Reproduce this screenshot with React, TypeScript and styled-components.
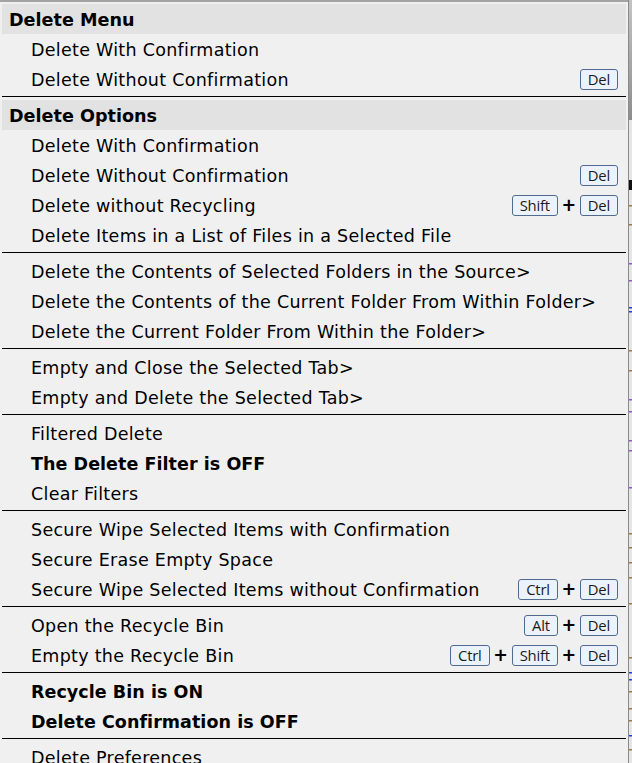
import React from "react";
import styled, { createGlobalStyle } from "styled-components";

const Global = createGlobalStyle`
  html, body {
    margin: 0;
    padding: 0;
    overflow: hidden;
    background: #f0f0f0;
  }
  body {
    font-family: "DejaVu Sans", Verdana, sans-serif;
  }
`;

const Screen = styled.div`
  display: flex;
  width: 632px;
  height: 763px;
  overflow: hidden;
`;

const Panel = styled.div`
  flex: 0 0 628px;
  box-sizing: border-box;
  border-top: 2px solid #a3a3a3;
  padding: 2px 2px 0 2px;
  background: #f0f0f0;
  display: flex;
  flex-direction: column;
`;

const Header = styled.div`
  flex: 0 0 30px;
  box-sizing: border-box;
  display: flex;
  align-items: center;
  padding: 2px 0 0 7px;
  background: #e2e2e2;
  font-size: 17.6px;
  font-weight: bold;
  color: #000;
`;

const Item = styled.div<{ $bold?: boolean }>`
  flex: 0 0 30px;
  box-sizing: border-box;
  display: flex;
  align-items: center;
  justify-content: space-between;
  padding: 2px 8px 0 29px;
  font-size: 17.5px;
  letter-spacing: ${(p) => (p.$bold ? "0.05px" : "0.28px")};
  font-weight: ${(p) => (p.$bold ? "bold" : "normal")};
  color: #000;
  white-space: nowrap;
`;

const Separator = styled.div`
  flex: 0 0 1px;
  margin: 2px 0 3px;
  background: #000;
`;

const Keys = styled.div`
  display: flex;
  align-items: center;
  margin-top: -2px;
  letter-spacing: 0;
`;

const Key = styled.span`
  display: inline-flex;
  align-items: center;
  justify-content: center;
  box-sizing: border-box;
  height: 21px;
  padding: 0 7px;
  border: 1px solid #4f6b8f;
  border-radius: 3px;
  background: #ecf2fb;
  font-family: "Open Sans", "Noto Sans", sans-serif;
  font-size: 14.8px;
  letter-spacing: -0.2px;
  font-weight: normal;
  color: #1a1a1a;
`;

const Plus = styled.span`
  display: inline-flex;
  justify-content: center;
  width: 22px;
  font-family: "DejaVu Sans", sans-serif;
  font-size: 17.5px;
  font-weight: bold;
  line-height: 21px;
  color: #000;
`;

const Strip = styled.svg`
  flex: 0 0 4px;
  display: block;
`;

type Row =
  | { kind: "header"; text: string }
  | { kind: "sep" }
  | { kind: "item"; text: string; bold?: boolean; keys?: string[] };

const rows: Row[] = [
  { kind: "header", text: "Delete Menu" },
  { kind: "item", text: "Delete With Confirmation" },
  { kind: "item", text: "Delete Without Confirmation", keys: ["Del"] },
  { kind: "sep" },
  { kind: "header", text: "Delete Options" },
  { kind: "item", text: "Delete With Confirmation" },
  { kind: "item", text: "Delete Without Confirmation", keys: ["Del"] },
  { kind: "item", text: "Delete without Recycling", keys: ["Shift", "Del"] },
  { kind: "item", text: "Delete Items in a List of Files in a Selected File" },
  { kind: "sep" },
  { kind: "item", text: "Delete the Contents of Selected Folders in the Source>" },
  { kind: "item", text: "Delete the Contents of the Current Folder From Within Folder>" },
  { kind: "item", text: "Delete the Current Folder From Within the Folder>" },
  { kind: "sep" },
  { kind: "item", text: "Empty and Close the Selected Tab>" },
  { kind: "item", text: "Empty and Delete the Selected Tab>" },
  { kind: "sep" },
  { kind: "item", text: "Filtered Delete" },
  { kind: "item", text: "The Delete Filter is OFF", bold: true },
  { kind: "item", text: "Clear Filters" },
  { kind: "sep" },
  { kind: "item", text: "Secure Wipe Selected Items with Confirmation" },
  { kind: "item", text: "Secure Erase Empty Space" },
  { kind: "item", text: "Secure Wipe Selected Items without Confirmation", keys: ["Ctrl", "Del"] },
  { kind: "sep" },
  { kind: "item", text: "Open the Recycle Bin", keys: ["Alt", "Del"] },
  { kind: "item", text: "Empty the Recycle Bin", keys: ["Ctrl", "Shift", "Del"] },
  { kind: "sep" },
  { kind: "item", text: "Recycle Bin is ON", bold: true },
  { kind: "item", text: "Delete Confirmation is OFF", bold: true },
  { kind: "sep" },
  { kind: "item", text: "Delete Preferences" },
];

const marks: { y: number; c: string }[] = [
  { y: 205, c: "#9a7a4a" },
  { y: 224, c: "#9a7a4a" },
  { y: 263, c: "#8a5cc0" },
  { y: 280, c: "#8a5cc0" },
  { y: 307, c: "#2040d0" },
  { y: 311, c: "#2040d0" },
  { y: 350, c: "#9a7a4a" },
  { y: 370, c: "#9a7a4a" },
  { y: 399, c: "#8a5cc0" },
  { y: 411, c: "#8a5cc0" },
  { y: 440, c: "#8a5cc0" },
  { y: 450, c: "#8a5cc0" },
  { y: 487, c: "#8a5cc0" },
  { y: 533, c: "#9a7a4a" },
  { y: 547, c: "#9a7a4a" },
  { y: 562, c: "#9a7a4a" },
  { y: 577, c: "#9a7a4a" },
  { y: 603, c: "#9a7a4a" },
  { y: 657, c: "#9a7a4a" },
  { y: 672, c: "#2040d0" },
  { y: 679, c: "#2040d0" },
  { y: 691, c: "#9a7a4a" },
  { y: 708, c: "#9a7a4a" },
  { y: 720, c: "#9a7a4a" },
  { y: 735, c: "#2040d0" },
  { y: 749, c: "#9a7a4a" },
];

function BackgroundSliver() {
  return (
    <Strip width="4" height="763" viewBox="0 0 4 763">
      <defs>
        <linearGradient id="topg" x1="0" y1="0" x2="0" y2="1">
          <stop offset="0" stopColor="#c4c4c4" />
          <stop offset="1" stopColor="#8c8c8c" />
        </linearGradient>
      </defs>
      <rect x="0" y="0" width="4" height="120" fill="url(#topg)" />
      <rect x="0" y="120" width="4" height="643" fill="#e6e6e6" />
      <rect x="0" y="0" width="1" height="763" fill="#8a8a8a" />
      <rect x="1" y="180" width="3" height="10" fill="#111" />
      {marks.map((m, i) => (
        <rect key={i} x="1" y={m.y} width="3" height="1.5" fill={m.c} />
      ))}
    </Strip>
  );
}

function KeyCombo({ keys }: { keys: string[] }) {
  return (
    <Keys>
      {keys.map((k, i) => (
        <React.Fragment key={i}>
          {i > 0 && <Plus>+</Plus>}
          <Key>{k}</Key>
        </React.Fragment>
      ))}
    </Keys>
  );
}

export default function App() {
  return (
    <>
      <Global />
      <Screen>
        <Panel>
          {rows.map((r, i) => {
            if (r.kind === "header") return <Header key={i}>{r.text}</Header>;
            if (r.kind === "sep") return <Separator key={i} />;
            return (
              <Item key={i} $bold={r.bold}>
                <span>{r.text}</span>
                {r.keys && <KeyCombo keys={r.keys} />}
              </Item>
            );
          })}
        </Panel>
        <BackgroundSliver />
      </Screen>
    </>
  );
}
